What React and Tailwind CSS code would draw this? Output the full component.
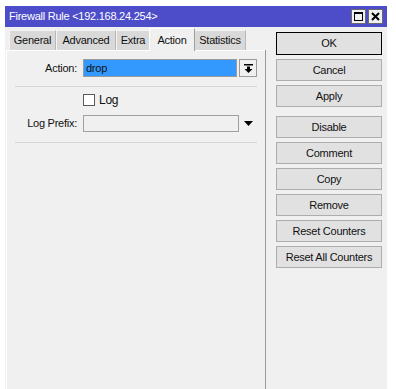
const FONT = { fontFamily: '"Liberation Sans", Arial, sans-serif' };

const TABS = [
  { label: 'General', width: 'w-[47px]' },
  { label: 'Advanced', width: 'w-[60px]' },
  { label: 'Extra', width: 'w-[34px]' },
  { label: 'Action', width: 'w-[46px]', active: true },
  { label: 'Statistics', width: 'w-[52px]' },
];

const BUTTONS = [
  { label: 'OK', primary: true },
  { label: 'Cancel' },
  { label: 'Apply', gapAfter: true },
  { label: 'Disable' },
  { label: 'Comment' },
  { label: 'Copy' },
  { label: 'Remove' },
  { label: 'Reset Counters' },
  { label: 'Reset All Counters' },
];

function TitleButton({ children }) {
  return (
    <div className="flex h-[15px] w-[15px] items-center justify-center border border-[#6b6b6b] bg-[#f0f0f0]">
      {children}
    </div>
  );
}

function Tab({ label, width, active }) {
  if (active) {
    return (
      <div
        className={`relative z-10 -mx-[1px] -mb-[1px] flex h-[23px] ${width} items-start justify-center border-l border-t border-r border-l-white border-t-white border-r-[#a0a0a0] bg-[#f0f0f0] pt-[3px]`}
      >
        {label}
      </div>
    );
  }
  return (
    <div
      className={`flex h-[20px] ${width} items-center justify-center border-l border-t border-l-[#f4f4f4] border-t-[#f4f4f4] border-r border-r-[#b8b8b8] bg-[#d9d9d9]`}
    >
      {label}
    </div>
  );
}

function DropIcon() {
  return (
    <svg width="9" height="9" viewBox="0 0 9 9">
      <rect x="0" y="0" width="9" height="1.5" fill="#000" />
      <rect x="3" y="2.5" width="3" height="2.5" fill="#000" />
      <polygon points="0.5,5 8.5,5 4.5,9" fill="#000" />
    </svg>
  );
}

export default function App() {
  return (
    <div
      className="h-[389px] w-[396px] overflow-hidden bg-white pl-[5px] pt-[6px] text-[11px] tracking-[-0.25px] text-[#111]"
      style={FONT}
    >
      <div className="flex h-[383px] w-[382px] flex-col bg-[#f0f0f0]">
        <div className="flex h-[21px] items-center justify-between bg-[#4d4dca] pl-[4px] pr-[4px] text-white">
          <span className="text-[11px]">Firewall Rule &lt;192.168.24.254&gt;</span>
          <div className="flex gap-[2px]">
            <TitleButton>
              <div className="h-[9px] w-[9px] border border-t-2 border-black" />
            </TitleButton>
            <TitleButton>
              <svg width="9" height="9" viewBox="0 0 9 9">
                <path d="M1 1 L8 8 M8 1 L1 8" stroke="#000" strokeWidth="2" />
              </svg>
            </TitleButton>
          </div>
        </div>

        <div className="flex flex-1">
          <div className="flex w-[260px] flex-col">
            <div className="flex h-[23px] items-end pl-[4px]">
              {TABS.map((tab) => (
                <Tab key={tab.label} {...tab} />
              ))}
            </div>
            <div className="ml-[1px] flex-1 border-l border-t border-white pr-[8px] pt-[8px]">
              <div className="flex h-[18px] items-center">
                <div className="w-[70px] text-right">Action:</div>
                <div className="ml-[6px] flex h-[18px] w-[154px] items-center border border-[#9a9a9a] bg-[#3399ff] pl-[2px]">
                  drop
                </div>
                <div className="ml-[2px] flex h-[18px] w-[18px] items-center justify-center border border-[#9a9a9a] bg-[#f0f0f0]">
                  <DropIcon />
                </div>
              </div>
              <div className="ml-[8px] mt-[9px] h-px bg-[#d4d4d4]" />
              <div className="mt-[7px] flex h-[12px] items-center">
                <div className="ml-[76px] h-[12px] w-[12px] border border-[#5a5a5a] bg-white" />
                <span className="ml-[4px] text-[12px]">Log</span>
              </div>
              <div className="mt-[9px] flex h-[17px] items-center">
                <div className="w-[70px] text-right">Log Prefix:</div>
                <div className="ml-[6px] h-[17px] w-[156px] border border-[#a0a0a0] bg-[#f0f0f0]" />
                <svg className="ml-[5px]" width="9" height="5" viewBox="0 0 9 5">
                  <polygon points="0,0 9,0 4.5,5" fill="#000" />
                </svg>
              </div>
              <div className="ml-[8px] mt-[10px] h-px bg-[#d4d4d4]" />
            </div>
          </div>

          <div className="mt-[23px] w-px bg-[#9a9a9a]" />

          <div className="flex flex-1 flex-col pl-[10px] pr-[5px] pt-[5px]">
            {BUTTONS.map((btn) => (
              <button
                key={btn.label}
                type="button"
                className={`flex w-[106px] items-center justify-center border ${
                  btn.primary ? 'h-[23px] border-black' : 'h-[22px] border-[#adadad]'
                } bg-[#e1e1e1] ${btn.gapAfter ? 'mb-[9px]' : 'mb-[4px]'}`}
              >
                {btn.label}
              </button>
            ))}
          </div>
        </div>
      </div>
    </div>
  );
}
